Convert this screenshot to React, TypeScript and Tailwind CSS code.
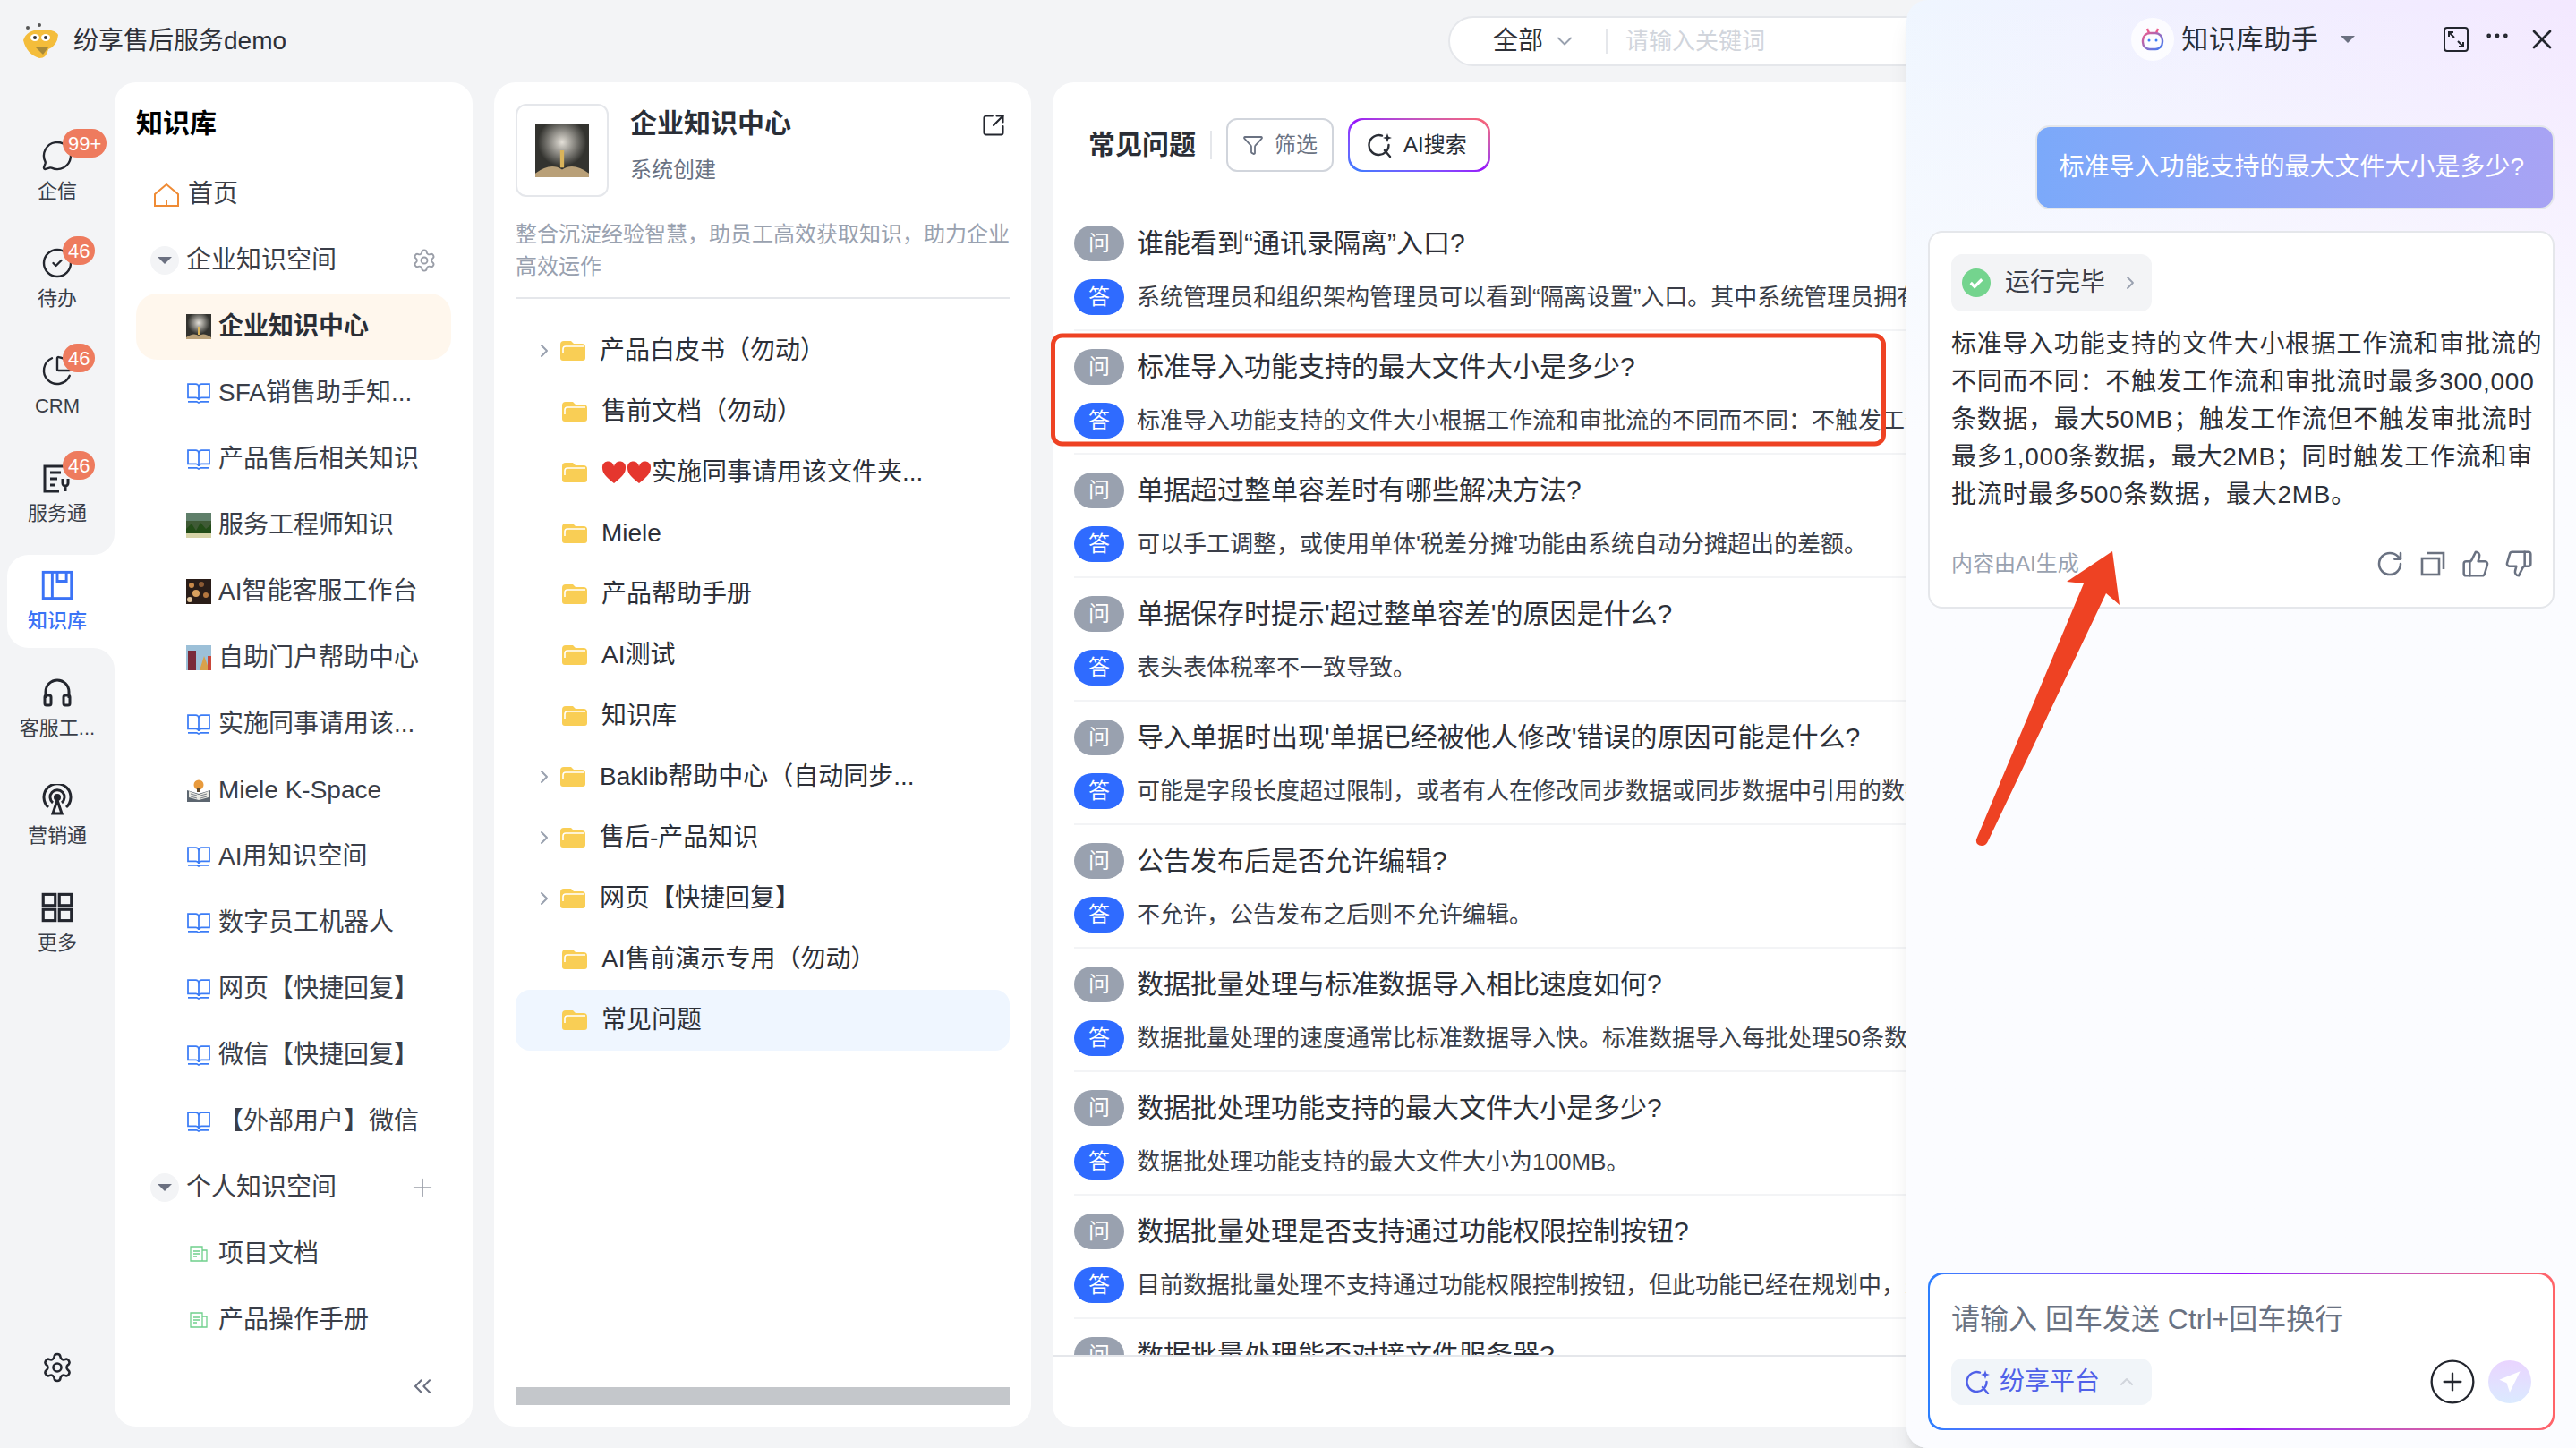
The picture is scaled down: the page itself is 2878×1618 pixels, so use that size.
import {
  ChartPie,
  ChevronDown,
  ChevronRight,
  ChevronUp,
  ChevronsLeft,
  CircleCheck,
  CirclePlus,
  Ellipsis,
  Filter,
  MessageCircle,
  Plus,
  RotateCw,
  Settings,
  SquareArrowOutUpRight,
  ThumbsDown,
  ThumbsUp,
  X,
} from "lucide-react";

const font =
  "font-['Liberation_Sans','Noto_Sans_CJK_SC',sans-serif] text-[28px]";
const answerText = "text-[26px]";
const railText = "text-[22px]";

function Logo() {
  return (
    <svg viewBox="0 0 42 42" className="size-10.5 shrink-0">
      <circle cx="7" cy="6" r="2" fill="#555" />
      <circle cx="20" cy="3" r="2" fill="#555" />
      <path d="M2 20 Q6 8 22 8 Q38 8 41 14 Q40 26 30 30 Q28 40 20 40 Q6 36 2 20Z" fill="#f4bd3b" />
      <ellipse cx="15" cy="17" rx="5" ry="4" fill="#fff" />
      <ellipse cx="27" cy="17" rx="5" ry="4" fill="#fff" />
      <circle cx="15" cy="17" r="2" fill="#333" />
      <circle cx="27" cy="17" r="2" fill="#333" />
      <path d="M16 28 L30 28 L24 36Z" fill="#a88a3a" />
    </svg>
  );
}

function Badge({ text }: { text: string }) {
  return (
    <span className={"absolute -top-2.5 left-6 flex h-8 items-center rounded-full bg-[#ee7b5e] px-1.5 text-white " + railText}>
      {text}
    </span>
  );
}

function ServiceIcon() {
  return (
    <svg viewBox="0 0 36 36" fill="none" stroke="#23262e" strokeWidth="3" className="size-9">
      <path d="M31 15V5H4v28h16" />
      <path d="M10 12h12M10 19h8M10 26h6" />
      <path d="M24 19v5a3 3 0 0 0 6 0v-5M27 27v6" />
    </svg>
  );
}

function KnowledgeIcon() {
  return (
    <svg viewBox="0 0 32 32" fill="none" stroke="#3b73f6" strokeWidth="2.6" className="size-9">
      <rect x="2" y="3" width="28" height="26" />
      <path d="M11 3v26M16 3v9h9V3" />
    </svg>
  );
}

function HeadsetIcon() {
  return (
    <svg viewBox="0 0 36 36" fill="none" stroke="#23262e" strokeWidth="3" className="size-9">
      <path d="M5 24V17a13 13 0 0 1 26 0v7" />
      <rect x="4" y="21" width="7" height="11" rx="2" />
      <rect x="25" y="21" width="7" height="11" rx="2" />
    </svg>
  );
}

function TowerIcon() {
  return (
    <svg viewBox="0 0 36 36" fill="none" stroke="#23262e" strokeWidth="3" className="size-9">
      <path d="M8 26a15 15 0 1 1 20 0" />
      <path d="M13 21a8 8 0 1 1 10 0" />
      <circle cx="18" cy="15" r="2.5" fill="#23262e" />
      <path d="M18 18l-5 15h10z" />
    </svg>
  );
}

function GridIcon() {
  return (
    <svg viewBox="0 0 32 32" fill="none" stroke="#23262e" strokeWidth="2.8" className="size-9">
      <rect x="2" y="3" width="12" height="11" />
      <rect x="18" y="3" width="12" height="11" />
      <rect x="2" y="18" width="12" height="11" />
      <rect x="18" y="18" width="12" height="11" />
    </svg>
  );
}

function RailItem({
  label,
  icon,
  badge,
  active,
}: {
  label: string;
  icon: React.ReactNode;
  badge?: string;
  active?: boolean;
}) {
  return (
    <div
      className={
        "relative ml-2 flex h-26 w-30 flex-col items-center pt-3.5 pr-2 " +
        (active ? "rounded-l-3xl bg-white text-[#3b73f6] font-medium" : "text-[#3a3e48]")
      }
    >
      {active && (
        <>
          <span className="absolute right-0 -top-6 size-6 bg-white">
            <span className="block size-6 rounded-br-3xl bg-gray-100" />
          </span>
          <span className="absolute right-0 -bottom-6 size-6 bg-white">
            <span className="block size-6 rounded-tr-3xl bg-gray-100" />
          </span>
        </>
      )}
      <div className="relative flex h-10 items-center justify-center text-[#23262e]">
        {icon}
        {badge && <Badge text={badge} />}
      </div>
      <span className={"mt-1 leading-8 whitespace-nowrap " + railText}>{label}</span>
    </div>
  );
}

function Rail() {
  return (
    <aside className="flex w-32 shrink-0 flex-col gap-4 pt-12 pb-12">
      <RailItem label="企信" badge="99+" icon={<MessageCircle className="size-9" strokeWidth={1.6} />} />
      <RailItem label="待办" badge="46" icon={<CircleCheck className="size-9" strokeWidth={1.6} />} />
      <RailItem label="CRM" badge="46" icon={<ChartPie className="size-9" strokeWidth={1.6} />} />
      <RailItem label="服务通" badge="46" icon={<ServiceIcon />} />
      <RailItem label="知识库" active icon={<KnowledgeIcon />} />
      <RailItem label="客服工..." icon={<HeadsetIcon />} />
      <RailItem label="营销通" icon={<TowerIcon />} />
      <RailItem label="更多" icon={<GridIcon />} />
      <div className="mt-auto flex justify-center">
        <Settings className="size-9 text-[#23262e]" strokeWidth={1.7} />
      </div>
    </aside>
  );
}

function BookIcon() {
  return (
    <svg viewBox="0 0 24 22" fill="none" stroke="#3b7cf6" strokeWidth="1.6" className="h-6 w-7 shrink-0">
      <path d="M1 2h8a3 3 0 0 1 3 3v13a3 3 0 0 0-3-2H1zM23 2h-8a3 3 0 0 0-3 3v13a3 3 0 0 1 3-2h8z" />
      <path d="M1 20h9l2 1 2-1h9" />
    </svg>
  );
}

function DocIcon() {
  return (
    <svg viewBox="0 0 20 20" fill="none" stroke="#6fd08c" strokeWidth="1.3" className="size-7 shrink-0 p-1">
      <path d="M1 2h13v16H1zM14 6h5v12h-5" />
      <path d="M4 7h7M4 10h7M4 13h4" />
    </svg>
  );
}

function Photo({ kind, className }: { kind: string; className: string }) {
  return (
    <svg viewBox="0 0 28 28" className={className} preserveAspectRatio="none">
      {kind === "bulb" && (
        <>
          <defs>
            <radialGradient id="glow" cx="50%" cy="35%" r="45%">
              <stop offset="0%" stopColor="#e4e0d8" />
              <stop offset="100%" stopColor="#33332f" />
            </radialGradient>
          </defs>
          <rect width="28" height="28" fill="url(#glow)" />
          <rect x="13" y="14" width="2" height="9" fill="#d9b35a" />
          <path d="M0 28 L0 26 Q8 20 14 24 Q20 20 28 26 L28 28Z" fill="#b9a078" />
        </>
      )}
      {kind === "forest" && (
        <>
          <rect width="28" height="28" fill="#3f5a36" />
          <rect width="28" height="9" fill="#5f7f6a" />
          <path d="M0 28V18L6 12l5 8 5-9 6 7 6-5v15z" fill="#234d18" />
          <rect y="23" width="28" height="5" fill="#d7d4a8" />
        </>
      )}
      {kind === "crowd" && (
        <>
          <rect width="28" height="28" fill="#2a1d18" />
          <circle cx="6" cy="7" r="3" fill="#c98a4a" />
          <circle cx="17" cy="6" r="3" fill="#8b5a34" />
          <circle cx="11" cy="16" r="4" fill="#d9a15e" />
          <circle cx="22" cy="18" r="3" fill="#b5773f" />
          <circle cx="4" cy="23" r="3" fill="#e0c39a" />
        </>
      )}
      {kind === "portal" && (
        <>
          <rect width="28" height="28" fill="#9cc0d8" />
          <rect x="2" y="6" width="9" height="22" fill="#7a2a3a" />
          <path d="M15 28l5-16 6 16z" fill="#d9a14a" />
          <rect x="24" y="12" width="4" height="16" fill="#c9473a" />
        </>
      )}
      {kind === "lamp" && (
        <>
          <path d="M1 14l13 4 13-4v13H1z" fill="#5c6670" />
          <path d="M3 15l11 4v6L3 22zM25 15l-11 4v6l11-3z" fill="#e9e9e2" />
          <path d="M5 18l7 2M5 21l7 2M23 18l-7 2M23 21l-7 2" stroke="#7a8088" strokeWidth="1" />
          <circle cx="14" cy="8" r="5.5" fill="#e89a3c" />
          <rect x="12" y="12" width="4" height="4" fill="#5c4a30" />
        </>
      )}
    </svg>
  );
}

const rowHeight = "h-[74px]";

function SpaceRow({ label, thumb, active }: { label: string; thumb?: string; active?: boolean }) {
  return (
    <div
      className={
        rowHeight +
        " flex shrink-0 items-center rounded-3xl pl-14 " +
        (active ? "bg-orange-50 font-bold text-[#2a2e36]" : "text-[#3a3e48]")
      }
    >
      {thumb === "doc" ? (
        <DocIcon />
      ) : thumb ? (
        <Photo kind={thumb} className="size-7 shrink-0" />
      ) : (
        <BookIcon />
      )}
      <span className="ml-2 whitespace-nowrap">{label}</span>
    </div>
  );
}

function SectionRow({ label, action }: { label: string; action: React.ReactNode }) {
  return (
    <div className={rowHeight + " flex shrink-0 items-center pl-4 pr-4 text-[#3a3e48]"}>
      <span className="flex size-8 items-center justify-center rounded-full bg-gray-100">
        <svg viewBox="0 0 16 10" className="h-2.5 w-4">
          <path d="M0 1h16L8 9z" fill="#6b7080" />
        </svg>
      </span>
      <span className="ml-2 flex-1">{label}</span>
      {action}
    </div>
  );
}

function SpacesPanel() {
  return (
    <section className="flex w-100 shrink-0 flex-col rounded-3xl bg-white px-6">
      <h2 className="pt-7 pb-6 text-3xl font-bold text-black">知识库</h2>
      <div className={rowHeight + " flex shrink-0 items-center pl-5 text-[#3a3e48]"}>
        <svg viewBox="0 0 28 28" fill="none" stroke="#ef8b35" strokeWidth="2" className="size-7">
          <path d="M1 27V14L14 3l13 11v13zM14 27v-6" />
        </svg>
        <span className="ml-2.5">首页</span>
      </div>
      <SectionRow label="企业知识空间" action={<Settings className="size-7 text-[#9a9ea8]" strokeWidth={1.6} />} />
      <SpaceRow label="企业知识中心" thumb="bulb" active />
      <SpaceRow label="SFA销售助手知..." />
      <SpaceRow label="产品售后相关知识" />
      <SpaceRow label="服务工程师知识" thumb="forest" />
      <SpaceRow label="AI智能客服工作台" thumb="crowd" />
      <SpaceRow label="自助门户帮助中心" thumb="portal" />
      <SpaceRow label="实施同事请用该..." />
      <SpaceRow label="Miele K-Space" thumb="lamp" />
      <SpaceRow label="AI用知识空间" />
      <SpaceRow label="数字员工机器人" />
      <SpaceRow label="网页【快捷回复】" />
      <SpaceRow label="微信【快捷回复】" />
      <SpaceRow label="【外部用户】微信" />
      <SectionRow label="个人知识空间" action={<Plus className="size-8 text-[#9a9ea8]" strokeWidth={1.3} />} />
      <SpaceRow label="项目文档" thumb="doc" />
      <SpaceRow label="产品操作手册" thumb="doc" />
      <div className={rowHeight + " flex shrink-0 items-center justify-end pr-4"}>
        <ChevronsLeft className="size-8 text-[#6b7080]" strokeWidth={1.6} />
      </div>
    </section>
  );
}

function FolderIcon() {
  return (
    <svg viewBox="0 0 28 22" className="h-5.5 w-7 shrink-0">
      <path d="M0 4a4 4 0 0 1 4-4h8l3 3h9a4 4 0 0 1 4 4v12a3 3 0 0 1-3 3H3a3 3 0 0 1-3-3z" fill="#f9ce55" />
      <path d="M3 14V9a3 3 0 0 1 3-3h20" fill="none" stroke="#fff" strokeWidth="1.6" />
    </svg>
  );
}

const folders: { label: React.ReactNode; more?: boolean; active?: boolean }[] = [
  { label: "产品白皮书（勿动）", more: true },
  { label: "售前文档（勿动）" },
  {
    label: (
      <span className="flex items-center">
        <Heart />
        <Heart />
        实施同事请用该文件夹...
      </span>
    ),
  },
  { label: "Miele" },
  { label: "产品帮助手册" },
  { label: "AI测试" },
  { label: "知识库" },
  { label: "Baklib帮助中心（自动同步...", more: true },
  { label: "售后-产品知识", more: true },
  { label: "网页【快捷回复】", more: true },
  { label: "AI售前演示专用（勿动）" },
  { label: "常见问题", active: true },
];

function Heart() {
  return (
    <svg viewBox="0 0 28 26" className="h-6.5 w-7 shrink-0">
      <path d="M14 25C4 17 1 13 1 8a6.5 6.5 0 0 1 13-2 6.5 6.5 0 0 1 13 2c0 5-3 9-13 17z" fill="#e5362e" />
    </svg>
  );
}

function FolderPanel() {
  return (
    <section className="flex w-150 shrink-0 flex-col rounded-3xl bg-white px-6 pt-6 pb-6">
      <div className="flex">
        <div className="flex size-26 shrink-0 items-center justify-center rounded-xl border-2 border-gray-200">
          <Photo kind="bulb" className="size-15" />
        </div>
        <div className="ml-6 pt-1">
          <h2 className="text-3xl font-bold text-[#2a2e36]">企业知识中心</h2>
          <p className="mt-4 text-2xl leading-9 text-gray-500">系统创建</p>
        </div>
        <SquareArrowOutUpRight className="mt-2.5 mr-1 ml-auto size-7 text-[#23262e]" strokeWidth={1.8} />
      </div>
      <p className="mt-6 border-b-2 border-gray-200 pb-4 text-2xl leading-9 text-gray-400">
        整合沉淀经验智慧，助员工高效获取知识，助力企业高效运作
      </p>
      <div className="mt-6 flex flex-col">
        {folders.map((f, i) => (
          <div
            key={i}
            className={
              "flex h-17 items-center rounded-2xl pl-5 text-[#2d3038] " + (f.active ? "bg-blue-50" : "")
            }
          >
            {f.more ? (
              <ChevronRight className="mr-1.5 size-6 shrink-0 text-gray-400" strokeWidth={2} />
            ) : (
              <span className="w-8 shrink-0" />
            )}
            <FolderIcon />
            <span className="ml-4 whitespace-nowrap">{f.label}</span>
          </div>
        ))}
      </div>
      <div className="mt-auto h-5 bg-[#c4c7cb]" />
    </section>
  );
}

const faqs = [
  ["谁能看到“通讯录隔离”入口?", "系统管理员和组织架构管理员可以看到“隔离设置”入口。其中系统管理员拥有全部权限，组织架构管理员可以查看"],
  ["标准导入功能支持的最大文件大小是多少?", "标准导入功能支持的文件大小根据工作流和审批流的不同而不同：不触发工作流和审批流时最多300,000条数据"],
  ["单据超过整单容差时有哪些解决方法?", "可以手工调整，或使用单体'税差分摊'功能由系统自动分摊超出的差额。"],
  ["单据保存时提示'超过整单容差'的原因是什么?", "表头表体税率不一致导致。"],
  ["导入单据时出现'单据已经被他人修改'错误的原因可能是什么?", "可能是字段长度超过限制，或者有人在修改同步数据或同步数据中引用的数据，请稍后再次尝试导入。"],
  ["公告发布后是否允许编辑?", "不允许，公告发布之后则不允许编辑。"],
  ["数据批量处理与标准数据导入相比速度如何?", "数据批量处理的速度通常比标准数据导入快。标准数据导入每批处理50条数据，数据批量处理每批处理更多数据"],
  ["数据批处理功能支持的最大文件大小是多少?", "数据批处理功能支持的最大文件大小为100MB。"],
  ["数据批量处理是否支持通过功能权限控制按钮?", "目前数据批量处理不支持通过功能权限控制按钮，但此功能已经在规划中，未来版本将支持相关的权限配置。"],
  ["数据批量处理能否对接文件服务器?", "数据批量处理暂不支持直接对接文件服务器。"],
];

function Pill({ blue, text }: { blue?: boolean; text: string }) {
  return (
    <span
      className={
        "flex h-10 w-14 shrink-0 items-center justify-center rounded-full text-2xl text-white " +
        (blue ? "bg-[#2f6bff]" : "bg-gray-400")
      }
    >
      {text}
    </span>
  );
}

function SparkSearch({ className }: { className: string }) {
  return (
    <svg viewBox="0 0 28 28" fill="none" stroke="currentColor" strokeWidth="2.4" className={className}>
      <path d="M16 3.6A11 11 0 1 0 23.5 14" strokeLinecap="round" />
      <path d="M19 20l6 7" strokeLinecap="round" />
      <path d="M22 1l1.3 3.7L27 6l-3.7 1.3L22 11l-1.3-3.7L17 6l3.7-1.3z" fill="currentColor" stroke="none" />
    </svg>
  );
}

function FaqPanel() {
  return (
    <section className="flex min-w-0 flex-1 flex-col rounded-3xl bg-white">
      <div className="flex shrink-0 items-center pt-10 pl-10">
        <h2 className="text-3xl font-bold text-[#2a2e36]">常见问题</h2>
        <span className="ml-4 h-8 border-l-2 border-gray-200" />
        <button className="ml-4 flex h-15 items-center gap-3 rounded-xl border-2 border-gray-300 px-4 text-2xl text-gray-500">
          <Filter className="size-6" strokeWidth={1.8} />
          筛选
        </button>
        <div className="ml-4 rounded-2xl bg-linear-to-tr from-blue-500 via-purple-600 to-red-400 p-0.5">
          <button className="flex h-14 items-center gap-3 rounded-2xl bg-white pr-6 pl-5 text-2xl text-[#2a2e36]">
            <SparkSearch className="size-7" />
            AI搜索
          </button>
        </div>
      </div>
      <div className="mt-15 min-h-0 flex-1 overflow-hidden px-6">
        {faqs.map(([q, a]) => (
          <div key={q} className="mb-5 border-b-2 border-gray-100 pb-4">
            <div className="flex items-center gap-3.5 whitespace-nowrap text-3xl text-[#2d3038]">
              <Pill text="问" />
              {q}
            </div>
            <div className={"mt-5 flex items-center gap-3.5 whitespace-nowrap text-[#3a3e48] " + answerText}>
              <Pill blue text="答" />
              {a}
            </div>
          </div>
        ))}
      </div>
      <div className="h-20 shrink-0 border-t-2 border-gray-200" />
    </section>
  );
}

function RobotIcon() {
  return (
    <span className="flex size-12 items-center justify-center rounded-full bg-white/80">
      <svg viewBox="0 0 28 28" fill="none" strokeWidth="2.4" className="size-7">
        <defs>
          <linearGradient id="bot" x1="0" y1="0" x2="1" y2="1">
            <stop offset="0%" stopColor="#ec5b8d" />
            <stop offset="100%" stopColor="#3b7cf6" />
          </linearGradient>
        </defs>
        <path d="M8 2l2 5M20 2l-2 5" stroke="#ec5b8d" />
        <rect x="3" y="7" width="22" height="18" rx="8" stroke="url(#bot)" />
        <circle cx="10" cy="15" r="1.5" fill="#3b7cf6" />
        <circle cx="18" cy="15" r="1.5" fill="#3b7cf6" />
      </svg>
    </span>
  );
}

function CopyIcon() {
  return (
    <svg viewBox="0 0 28 28" fill="none" stroke="#6b7280" strokeWidth="2.6" className="size-8 p-0.5">
      <rect x="2" y="8" width="19" height="18" />
      <path d="M8 2h18v18" />
    </svg>
  );
}

function ChatDrawer() {
  return (
    <aside className="absolute top-0 right-0 bottom-0 w-[748px] rounded-l-3xl bg-linear-to-r from-blue-50 to-purple-100 shadow-xl">
      <div className="flex h-full flex-col rounded-l-3xl bg-linear-to-b from-transparent to-[#fbfcff] to-30% px-6 pb-5">
        <header className="flex h-22 shrink-0 items-center">
          <div className="flex-1" />
          <RobotIcon />
          <span className="ml-2 text-3xl tracking-wide text-[#2a2e36]">知识库助手</span>
          <svg viewBox="0 0 16 10" className="ml-6 h-2.5 w-4">
            <path d="M0 1h16L8 9z" fill="#6b7080" />
          </svg>
          <div className="-mr-1 flex flex-1 items-center justify-end gap-4 text-[#23262e]">
            <svg viewBox="0 0 28 28" fill="none" stroke="currentColor" strokeWidth="2" className="size-7">
              <rect x="1" y="1" width="26" height="26" rx="3" />
              <path d="M6 11V6h5M6 6l6 6M22 17v5h-5M22 22l-6-6" />
            </svg>
            <Ellipsis className="-mt-2 size-8" strokeWidth={1.6} />
            <X className="size-9" strokeWidth={1.8} />
          </div>
        </header>

        <div className="mt-13 self-end rounded-2xl border-2 border-gray-200 bg-linear-to-r from-[#7ba9fa] to-[#a8a3f4] py-6 pr-8 pl-6 text-white">
          标准导入功能支持的最大文件大小是多少?
        </div>

        <div className="mt-6 rounded-2xl border-2 border-gray-200 bg-white pt-6 pr-2 pb-8 pl-6">
          <div className="flex h-16 w-fit items-center gap-4 rounded-xl bg-gray-100 px-3 text-[#3a3e48]">
            <span className="flex size-8 items-center justify-center rounded-full bg-[#74d48e]">
              <svg viewBox="0 0 16 16" fill="none" stroke="#fff" strokeWidth="2.6" className="size-5">
                <path d="M3 8l3.5 3.5L13 5" />
              </svg>
            </span>
            运行完毕
            <ChevronRight className="size-6 text-gray-400" strokeWidth={1.8} />
          </div>
          <p className="mt-4 leading-normal tracking-wide text-[#2d3038]">
            标准导入功能支持的文件大小根据工作流和审批流的不同而不同：不触发工作流和审批流时最多300,000条数据，最大50MB；触发工作流但不触发审批流时最多1,000条数据，最大2MB；同时触发工作流和审批流时最多500条数据，最大2MB。
          </p>
          <div className="mt-10 flex h-8 items-center justify-between pr-3.5 text-2xl text-gray-400">
            内容由AI生成
            <div className="flex items-center gap-4 text-gray-500">
              <RotateCw className="size-8" strokeWidth={1.9} />
              <CopyIcon />
              <ThumbsUp className="size-8" strokeWidth={1.9} />
              <ThumbsDown className="size-8" strokeWidth={1.9} />
            </div>
          </div>
        </div>

        <div className="mt-auto rounded-2xl bg-linear-to-r from-blue-500 via-purple-600 to-red-400 p-0.5">
          <div className="rounded-2xl bg-white px-6 pt-8 pb-6">
            <p className="text-[32px] leading-9 text-gray-500">请输入 回车发送 Ctrl+回车换行</p>
            <div className="mt-6 flex items-center">
              <div className="flex h-13 items-center gap-2.5 rounded-xl bg-slate-100 pr-4 pl-4 text-[#4f60e8]">
                <SparkSearch className="size-7" />
                纷享平台
                <ChevronUp className="ml-2 size-6 text-gray-300" strokeWidth={2} />
              </div>
              <CirclePlus className="mr-3 ml-auto size-14 text-[#23262e]" strokeWidth={1} />
              <span className="flex size-12 items-center justify-center rounded-full bg-linear-to-t from-blue-100 to-purple-200">
                <svg viewBox="0 0 24 24" className="size-7">
                  <path d="M22 2L2 10l7 3 3 9z" fill="#fff" />
                </svg>
              </span>
            </div>
          </div>
        </div>
      </div>
    </aside>
  );
}

// 标注层：红框和红色箭头
function Annotations() {
  return (
    <svg viewBox="0 0 2878 1618" className="pointer-events-none absolute inset-0 size-full">
      <rect x="1176.5" y="375" width="928" height="121" rx="10" fill="none" stroke="#ee4223" strokeWidth="5" />
      <path
        d="M2360 616 L2309 650 L2328 652 L2208 938 Q2207 944 2214 945 Q2219 945 2221 940 L2353 663 L2368 676Z"
        fill="#ee4223"
      />
    </svg>
  );
}

export default function App() {
  return (
    <div className={"relative flex h-screen w-screen flex-col overflow-hidden bg-gray-100 text-[#2d3038] " + font}>
      <header className="flex h-23 shrink-0 items-center pl-6">
        <Logo />
        <span className="ml-4">纷享售后服务demo</span>
        <div className="mr-90 ml-auto flex h-14 w-225 items-center rounded-full border-2 border-gray-200 bg-white pl-12">
          全部
          <ChevronDown className="ml-2.5 size-7 text-gray-400" strokeWidth={1.6} />
          <span className="ml-8 h-7 border-l-2 border-gray-200" />
          <span className={"ml-5 text-gray-300 " + answerText}>请输入关键词</span>
        </div>
      </header>
      <main className="flex min-h-0 flex-1 pb-6">
        <Rail />
        <div className="flex min-w-0 flex-1 gap-6">
          <SpacesPanel />
          <FolderPanel />
          <FaqPanel />
        </div>
      </main>
      <ChatDrawer />
      <Annotations />
    </div>
  );
}
